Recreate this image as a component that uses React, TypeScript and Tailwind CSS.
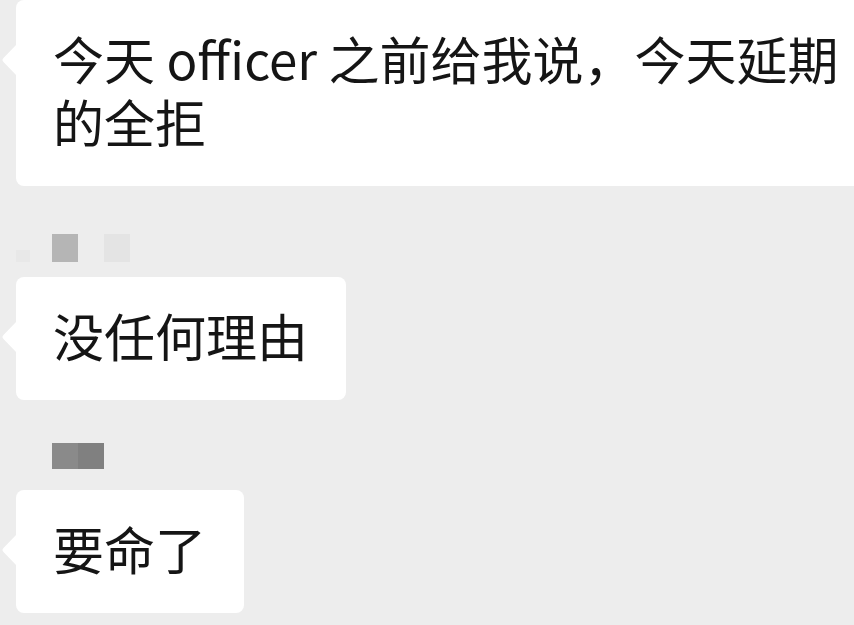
import React from 'react'

function Tail() {
  return (
    <svg className="absolute left-[-15px] top-[44px]" width="16" height="32" viewBox="0 0 16 32">
      <path d="M16 0 L2.5 14 Q0.5 16 2.5 18 L16 32 Z" fill="#ffffff" />
    </svg>
  )
}

function Bubble({ children, className = '' }: { children: React.ReactNode; className?: string }) {
  return (
    <div className={`relative bg-white rounded-[8px] pl-[37px] pr-[38px] pt-[27px] pb-[33px] text-[51px] leading-[63px] text-[#151515] ${className}`}>
      <Tail />
      {children}
    </div>
  )
}

export default function App() {
  return (
    <div
      className="w-[854px] h-[625px] overflow-hidden bg-[#ededed] pl-[16px]"
      style={{ fontFamily: '"Noto Sans CJK SC", "Noto Sans", sans-serif' }}
    >
      {/* first message, runs past the right edge */}
      <Bubble className="w-[880px]">今天 officer 之前给我说，今天延期的全拒</Bubble>

      {/* blurred sender name */}
      <div className="mt-[48px] h-[28px] flex items-end">
        <div className="w-[14px] h-[12px] bg-[#e8e8e8]" />
        <div className="ml-[22px] w-[26px] h-[28px] bg-[#b5b5b5]" />
        <div className="ml-[26px] w-[26px] h-[28px] bg-[#e4e4e4]" />
      </div>
      <Bubble className="mt-[15px] w-fit">没任何理由</Bubble>

      <div className="mt-[43px] ml-[36px] h-[26px] w-[52px] flex">
        <div className="w-[26px] h-full bg-[#8a8a8a]" />
        <div className="w-[26px] h-full bg-[#808080]" />
      </div>
      <Bubble className="mt-[21px] w-fit">要命了</Bubble>
    </div>
  )
}
